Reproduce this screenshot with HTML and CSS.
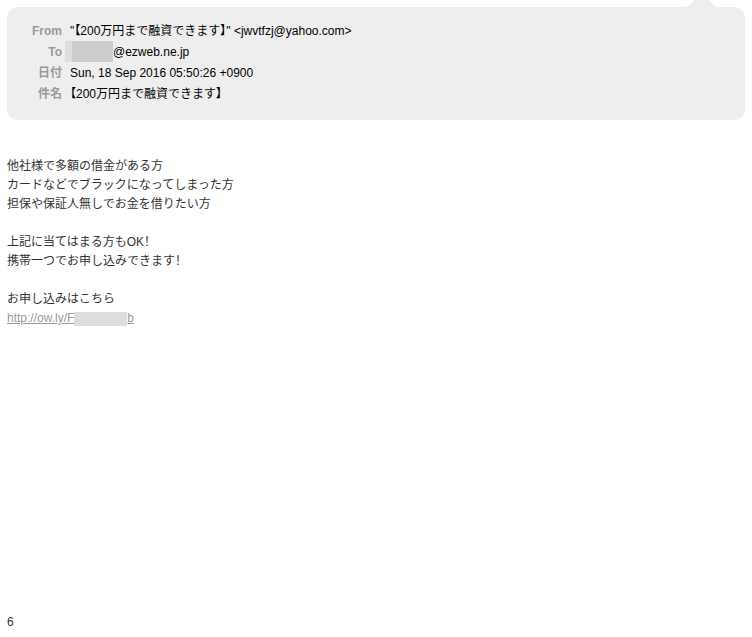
FILE: index.html
```html
<!DOCTYPE html>
<html lang="ja">
<head>
<meta charset="utf-8">
<title>Mail</title>
<link rel="stylesheet" href="styles.css">
</head>
<body>
<div class="page">
  <div class="header">
    <span class="arrow"></span>
    <table class="meta">
      <tr><th>From</th><td>"<span class="p">【</span>200万円まで融資できます<span class="p">】</span>" &lt;jwvtfzj@yahoo.com&gt;</td></tr>
      <tr><th>To</th><td><span class="mask-to"></span>@ezweb.ne.jp</td></tr>
      <tr><th>日付</th><td>Sun, 18 Sep 2016 05:50:26 +0900</td></tr>
      <tr><th>件名</th><td><span class="p">【</span>200万円まで融資できます<span class="p">】</span></td></tr>
    </table>
  </div>
  <div class="body">
    他社様で多額の借金がある方<br>
    カードなどでブラックになってしまった方<br>
    担保や保証人無しでお金を借りたい方<br>
    <br>
    上記に当てはまる方もOK<span class="p">！</span><br>
    携帯一つでお申し込みできます<span class="p">！</span><br>
    <br>
    お申し込みはこちら<br>
    <a class="link" href="#">http://ow.ly/F<span class="mask-link"></span>b</a>
  </div>
  <div class="footer">6</div>
</div>
</body>
</html>
```

FILE: styles.css
```css
html, body {
  margin: 0;
  padding: 0;
  background: #fff;
}
.page {
  box-sizing: border-box;
  min-height: 100vh;
  padding: 7px 7px 5px 7px;
  display: flex;
  flex-direction: column;
  font-family: "Liberation Sans", "Noto Sans CJK JP", sans-serif;
  font-size: 12px;
  color: #333;
  overflow: hidden;
}
.p {
  font-feature-settings: "palt";
}
.header {
  position: relative;
  background: #eeeeee;
  border-radius: 10px;
  padding: 14px 0 15px;
}
.arrow {
  position: absolute;
  width: 21px;
  height: 21px;
  background: #eeeeee;
  right: 33px;
  top: -10px;
  transform: rotate(45deg);
}
.meta {
  position: relative;
  border-collapse: collapse;
}
.meta th {
  width: 55px;
  text-align: right;
  color: #999;
  font-weight: bold;
  padding: 0 8px 0 0;
  height: 21px;
  line-height: 21px;
  white-space: nowrap;
}
.meta td {
  color: #000;
  padding: 0;
  height: 21px;
  line-height: 21px;
  white-space: nowrap;
}
.mask-to {
  display: inline-block;
  vertical-align: top;
  margin-top: -1px;
  margin-left: -5px;
  width: 48px;
  height: 21px;
  background: linear-gradient(to right, #dedede 0, #dedede 7px, #cccccc 7px);
}
.body {
  margin-top: 37px;
  line-height: 19px;
}
.link {
  color: #999;
  text-decoration: underline;
}
.mask-link {
  display: inline-block;
  vertical-align: middle;
  width: 53px;
  height: 14px;
  background: #dddddd;
}
.footer {
  margin-top: auto;
  line-height: 19px;
}
```
